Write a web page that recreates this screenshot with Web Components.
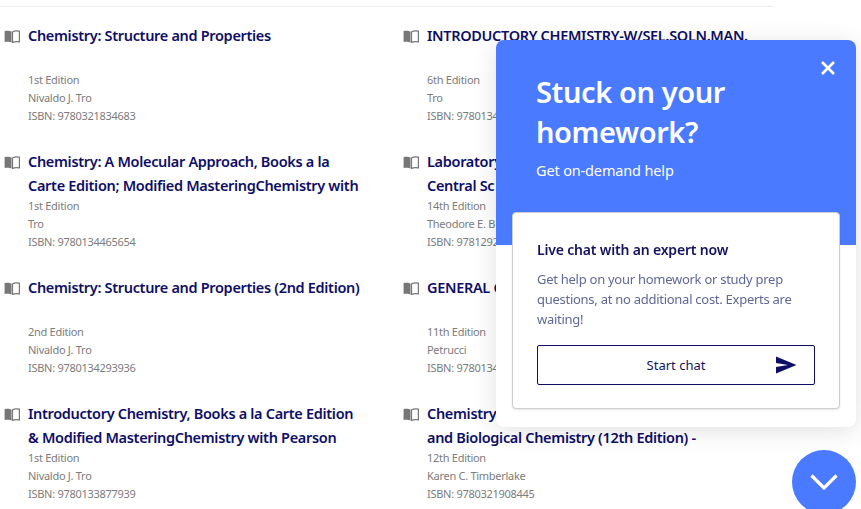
<!DOCTYPE html>
<html lang="en">
<head>
<meta charset="UTF-8">
<title>Chemistry textbooks</title>
<style>
  html, body { margin: 0; height: 100%; overflow: hidden; background: #fff; }
  body { font-family: "Noto Sans", "Open Sans", sans-serif; }
</style>
</head>
<body>
  <book-list>
    <book-item edition="1st Edition" author="Nivaldo J. Tro" isbn="ISBN: 9780321834683">Chemistry: Structure and Properties</book-item>
    <book-item edition="6th Edition" author="Tro" isbn="ISBN: 9780134">INTRODUCTORY CHEMISTRY-W/SEL.SOLN.MAN.</book-item>
    <book-item edition="1st Edition" author="Tro" isbn="ISBN: 9780134465654">Chemistry: A Molecular Approach, Books a la<br>Carte Edition; Modified MasteringChemistry with</book-item>
    <book-item edition="14th Edition" author="Theodore E. B" isbn="ISBN: 9781292">Laboratory<br>Central Sc</book-item>
    <book-item edition="2nd Edition" author="Nivaldo J. Tro" isbn="ISBN: 9780134293936">Chemistry: Structure and Properties (2nd Edition)</book-item>
    <book-item edition="11th Edition" author="Petrucci" isbn="ISBN: 9780134">GENERAL C</book-item>
    <book-item edition="1st Edition" author="Nivaldo J. Tro" isbn="ISBN: 9780133877939">Introductory Chemistry, Books a la Carte Edition<br>&amp; Modified MasteringChemistry with Pearson</book-item>
    <book-item edition="12th Edition" author="Karen C. Timberlake" isbn="ISBN: 9780321908445">Chemistry<br>and Biological Chemistry (12th Edition) -</book-item>
  </book-list>
  <chat-panel></chat-panel>
  <chat-toggle></chat-toggle>

  <template id="book-list-template">
    <style>
      :host {
        display: grid;
        grid-template-columns: 399px 374px;
        width: 773px;
        margin-top: 6px;
        border-top: 1px solid #eeeeee;
        padding-top: 16px;
      }
    </style>
    <slot></slot>
  </template>

  <template id="book-item-template">
    <style>
      :host {
        display: grid;
        grid-template-columns: 24px 1fr;
        height: 126px;
        padding-left: 4px;
        box-sizing: border-box;
      }
      svg { margin-top: 6px; }
      h3 {
        margin: 0;
        height: 48px;
        font-size: 14.5px;
        font-weight: 600;
        letter-spacing: -0.32px;
        line-height: 24px;
        color: #0e0e66;
        white-space: nowrap;
      }
      p {
        margin: 0;
        font-size: 11px;
        letter-spacing: -0.28px;
        line-height: 18px;
        color: #7c7c7c;
        white-space: nowrap;
      }
    </style>
    <svg width="16" height="14" viewBox="0 0 16 14">
      <path d="M7.5 2.6C6 1.6 3.2 1.4 0.6 2V13C3.2 12.4 6 12.6 7.5 13.4Z" fill="#777"/>
      <path d="M8.5 2.9C10 1.9 12.8 1.6 15.4 2.2V12.8C12.8 12.4 10 12.6 8.5 13.4Z" fill="#fff" stroke="#777" stroke-width="1.2"/>
    </svg>
    <div>
      <h3><slot></slot></h3>
      <p class="edition"></p>
      <p class="author"></p>
      <p class="isbn"></p>
    </div>
  </template>

  <template id="chat-panel-template">
    <style>
      :host {
        position: fixed;
        left: 496px;
        top: 40px;
        width: 360px;
        height: 387px;
        border-radius: 8px;
        background: #fff;
        box-shadow: 0 4px 24px rgba(0, 0, 0, 0.12);
        overflow: hidden;
        display: block;
      }
      .top {
        background: #4a7aff;
        height: 205px;
        padding: 32px 40px 0;
        box-sizing: border-box;
        color: #fff;
      }
      h2 {
        margin: 0;
        font-size: 29px;
        font-weight: 600;
        letter-spacing: -0.4px;
        line-height: 40px;
      }
      .sub {
        margin: 8px 0 0;
        font-size: 14.5px;
        letter-spacing: -0.15px;
        line-height: 20px;
      }
      .close {
        position: absolute;
        right: 20px;
        top: 20px;
        width: 16px;
        height: 16px;
      }
      .card {
        position: absolute;
        left: 16px;
        top: 172px;
        width: 328px;
        height: 197px;
        box-sizing: border-box;
        padding: 27px 24px 0;
        background: #fff;
        border: 1px solid #cfcfcf;
        border-radius: 4px;
        box-shadow: 0 1px 2px rgba(0, 0, 0, 0.1);
      }
      h4 {
        margin: 0;
        font-size: 14px;
        font-weight: 600;
        letter-spacing: -0.18px;
        line-height: 20px;
        color: #14145e;
      }
      .text {
        margin: 9px 0 0;
        font-size: 13px;
        letter-spacing: -0.27px;
        line-height: 20px;
        color: #5f6898;
      }
      button {
        display: flex;
        align-items: center;
        justify-content: center;
        position: relative;
        width: 278px;
        height: 40px;
        margin-top: 16px;
        padding: 0;
        background: #fff;
        border: 1px solid #0e0e66;
        border-radius: 2px;
        font: 13px "Noto Sans", sans-serif;
        color: #14145e;
      }
      button svg { position: absolute; right: 17px; top: 9px; }
    </style>
    <div class="top">
      <h2>Stuck on your<br>homework?</h2>
      <p class="sub">Get on-demand help</p>
    </div>
    <svg class="close" viewBox="0 0 16 16"><path d="M2 2L14 14M14 2L2 14" stroke="#fff" stroke-width="2.6" fill="none"/></svg>
    <div class="card">
      <h4>Live chat with an expert now</h4>
      <p class="text">Get help on your homework or study prep questions, at no additional cost. Experts are waiting!</p>
      <button>Start chat<svg width="22" height="20" viewBox="0 0 22 20"><path d="M1 1.5L21.5 10L1 18.5V12L13 10L1 8Z" fill="#0e0e66"/></svg></button>
    </div>
  </template>

  <template id="chat-toggle-template">
    <style>
      :host {
        position: fixed;
        left: 792px;
        top: 450px;
        width: 64px;
        height: 64px;
        border-radius: 50%;
        background: #4a7aff;
        display: flex;
        align-items: center;
        justify-content: center;
      }
    </style>
    <svg width="28" height="16" viewBox="0 0 28 16"><path d="M1.5 1.5L14 14L26.5 1.5" stroke="#fff" stroke-width="3.2" fill="none"/></svg>
  </template>

  <script>
    // clone a template into an open shadow root
    function mount(el, id) {
      el.attachShadow({ mode: 'open' });
      el.shadowRoot.appendChild(document.getElementById(id).content.cloneNode(true));
    }

    class BookList extends HTMLElement {
      connectedCallback() { mount(this, 'book-list-template'); }
    }

    class BookItem extends HTMLElement {
      connectedCallback() {
        mount(this, 'book-item-template');
        ['edition', 'author', 'isbn'].forEach(name => {
          this.shadowRoot.querySelector('.' + name).textContent = this.getAttribute(name);
        });
      }
    }

    class ChatPanel extends HTMLElement {
      connectedCallback() { mount(this, 'chat-panel-template'); }
    }

    class ChatToggle extends HTMLElement {
      connectedCallback() { mount(this, 'chat-toggle-template'); }
    }

    customElements.define('book-list', BookList);
    customElements.define('book-item', BookItem);
    customElements.define('chat-panel', ChatPanel);
    customElements.define('chat-toggle', ChatToggle);
  </script>
</body>
</html>
